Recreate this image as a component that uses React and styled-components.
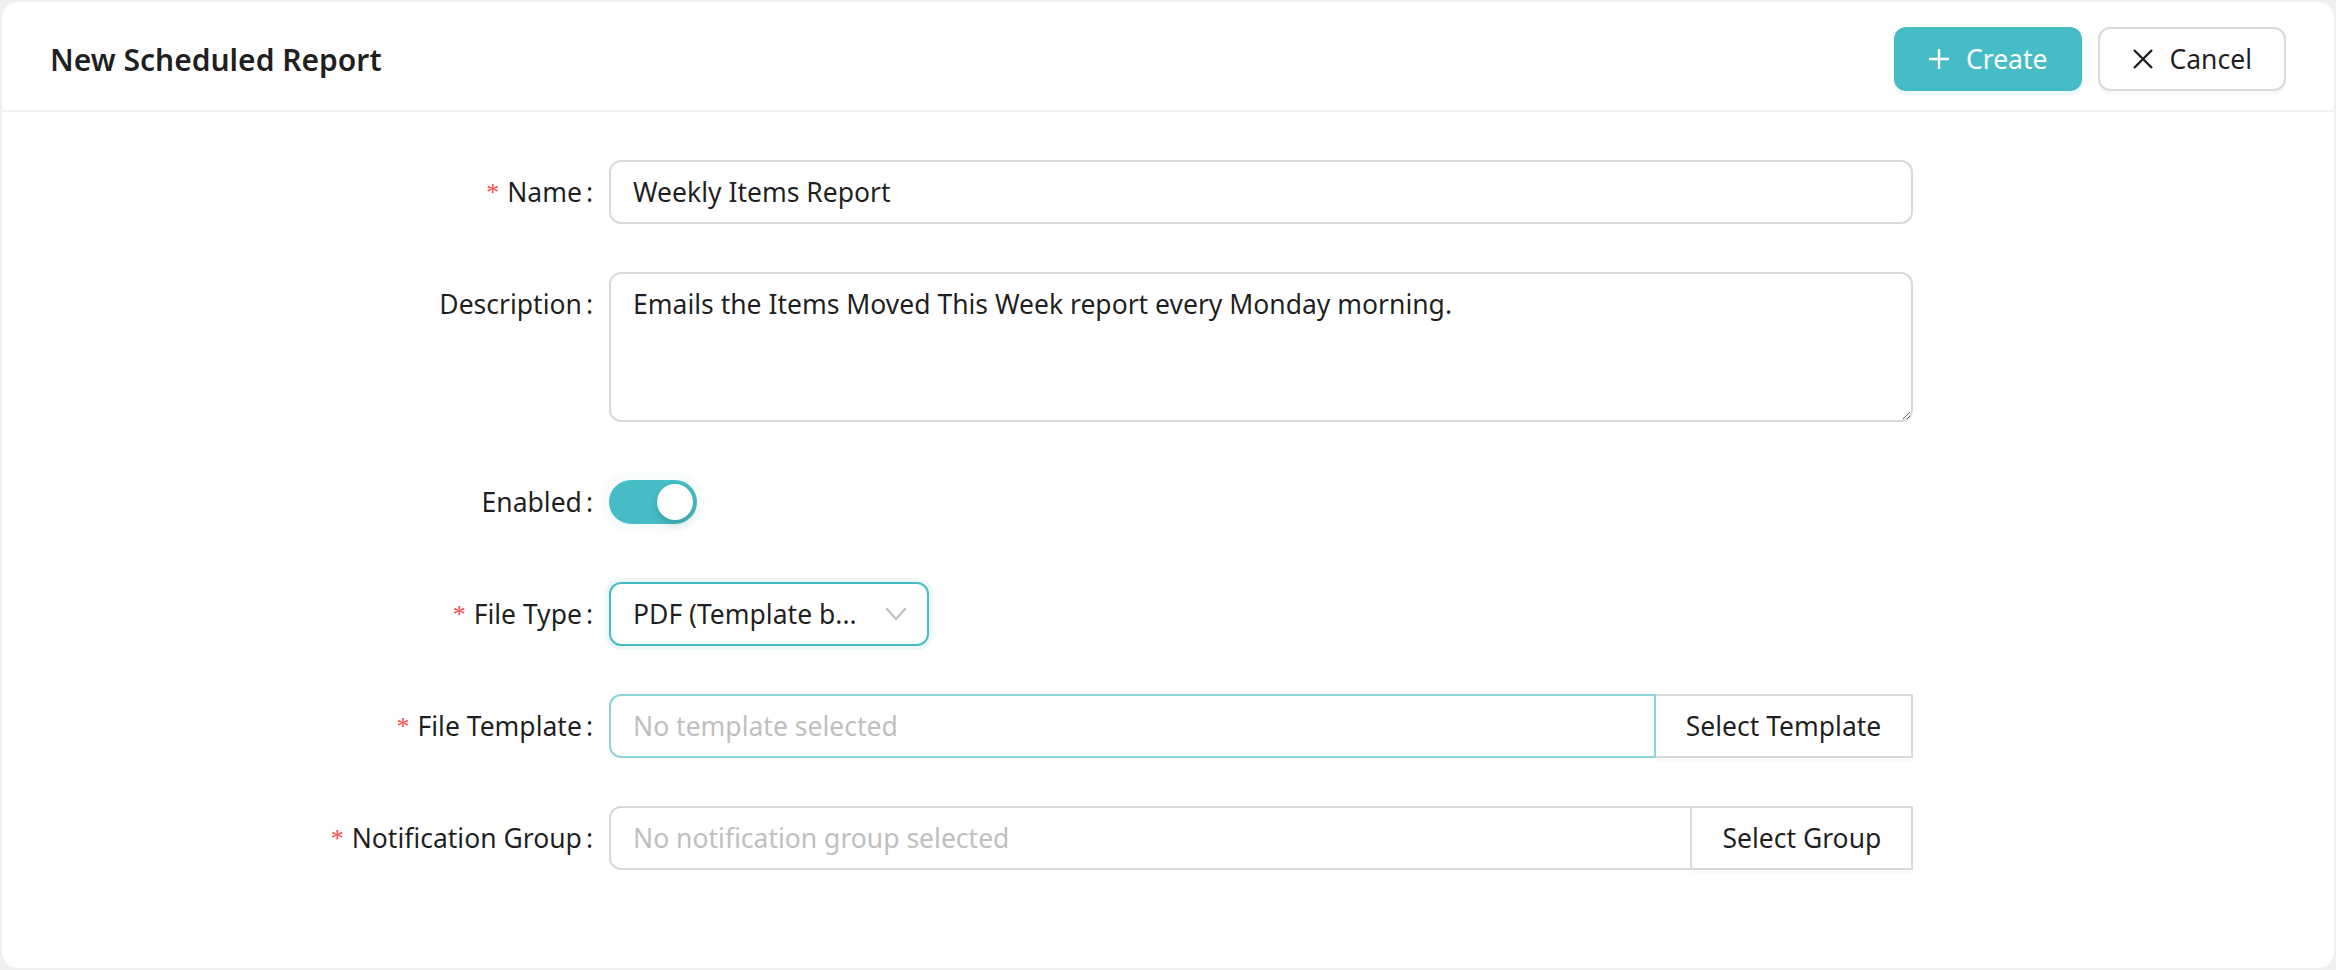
import React from 'react'
import styled, { createGlobalStyle } from 'styled-components'

const teal = '#46bdc6'
const textColor = 'rgba(0, 0, 0, 0.88)'

const GlobalStyle = createGlobalStyle`
  * { box-sizing: border-box; }
  html, body {
    margin: 0;
    background: #f0f0f0;
    font-family: "Noto Sans", "Segoe UI", Roboto, sans-serif;
    color: ${textColor};
  }
`

const Page = styled.div`
  padding: 2px;
  height: 970px;
`

const Card = styled.div`
  background: #fff;
  border-radius: 16px;
  height: 966px;
  display: flex;
  flex-direction: column;
`

const Head = styled.div`
  height: 110px;
  padding: 6px 48px 0;
  display: flex;
  align-items: center;
  justify-content: space-between;
  border-bottom: 2px solid #f0f0f0;
`

const Title = styled.div`
  font-size: 30px;
  font-weight: 600;
  color: ${textColor};
`

const Actions = styled.div`
  display: flex;
  gap: 16px;
`

const Button = styled.button`
  height: 64px;
  padding: 0 32px;
  display: inline-flex;
  align-items: center;
  gap: 16px;
  font-family: inherit;
  font-size: 26.5px;
  border-radius: 12px;
  cursor: pointer;
  border: 2px solid ${p => (p.$primary ? teal : '#d9d9d9')};
  background: ${p => (p.$primary ? teal : '#fff')};
  color: ${p => (p.$primary ? '#fff' : textColor)};
  box-shadow: ${p => (p.$primary ? '0 4px 0 rgba(70, 189, 198, 0.1)' : '0 4px 0 rgba(0, 0, 0, 0.02)')};
`

const Body = styled.div`
  padding: 48px;
  display: flex;
  flex-direction: column;
  gap: 48px;
`

const Row = styled.div`
  display: flex;
  align-items: flex-start;
`

const Label = styled.label`
  width: 25%;
  height: 64px;
  display: flex;
  align-items: center;
  justify-content: flex-end;
  font-size: 26.5px;
  white-space: nowrap;
`

const Required = styled.span`
  color: #ff4d4f;
  font-family: "Liberation Serif", serif;
  font-size: 26px;
  line-height: 1;
  margin-right: 8px;
  position: relative;
  top: 1px;
`

const Colon = styled.span`
  margin: 0 16px 0 4px;
`

const Control = styled.div`
  width: 58.333%;
  min-height: 64px;
  display: flex;
  align-items: center;
`

const field = `
  font-family: inherit;
  font-size: 26.5px;
  color: ${textColor};
  background: #fff;
  border: 2px solid #d9d9d9;
  border-radius: 12px;
  padding: 0 22px;
  outline: none;
`

const TextInput = styled.input`
  ${field}
  width: 100%;
  height: 64px;
  &::placeholder { color: #bfbfbf; }
`

const TextArea = styled.textarea`
  ${field}
  width: 100%;
  height: 150px;
  padding: 8px 22px;
  line-height: 44px;
  resize: vertical;
`

const Switch = styled.div`
  width: 88px;
  height: 44px;
  border-radius: 22px;
  background: ${teal};
  display: flex;
  align-items: center;
  justify-content: flex-end;
  padding: 4px;
  box-shadow: 0 0 0 8px rgba(70, 189, 198, 0.04);
`

const Knob = styled.span`
  width: 36px;
  height: 36px;
  border-radius: 50%;
  background: #fff;
  box-shadow: 0 4px 8px rgba(0, 35, 11, 0.2);
`

const Select = styled.div`
  ${field}
  width: 320px;
  height: 64px;
  border-color: ${teal};
  box-shadow: 0 0 0 4px rgba(70, 189, 198, 0.1);
  display: flex;
  align-items: center;
  justify-content: space-between;
  padding-right: 20px;
`

const Group = styled.div`
  display: flex;
  width: 100%;
  height: 64px;
`

const GroupInput = styled.input`
  ${field}
  flex: 1;
  min-width: 0;
  height: 64px;
  border-radius: 12px 0 0 12px;
  border-color: ${p => (p.$active ? '#8fd3d6' : '#d9d9d9')};
  &::placeholder { color: #bfbfbf; }
`

const AddonButton = styled.button`
  height: 64px;
  padding: 0 30px;
  font-family: inherit;
  font-size: 26.5px;
  color: ${textColor};
  background: #fff;
  border: 2px solid #d9d9d9;
  border-left: none;
  border-radius: 0;
  box-shadow: 0 4px 0 rgba(0, 0, 0, 0.02);
  cursor: pointer;
`

const PlusIcon = () => (
  <svg width="22" height="22" viewBox="0 0 22 22">
    <path d="M11 1v20M1 11h20" stroke="currentColor" strokeWidth="2.4" fill="none" />
  </svg>
)

const CloseIcon = () => (
  <svg width="22" height="22" viewBox="0 0 22 22">
    <path d="M2 2l18 18M20 2L2 20" stroke="currentColor" strokeWidth="2.4" fill="none" />
  </svg>
)

const Chevron = () => (
  <svg width="22" height="14" viewBox="0 0 22 14">
    <path d="M1.5 1.5L11 12l9.5-10.5" stroke="#bfbfbf" strokeWidth="2.2" fill="none" />
  </svg>
)

const FormRow = ({ label, required, children }) => (
  <Row>
    <Label>
      {required && <Required>*</Required>}
      {label}
      <Colon>:</Colon>
    </Label>
    <Control>{children}</Control>
  </Row>
)

export default function App() {
  return (
    <Page>
      <GlobalStyle />
      <Card>
        <Head>
          <Title>New Scheduled Report</Title>
          <Actions>
            <Button $primary>
              <PlusIcon />
              Create
            </Button>
            <Button>
              <CloseIcon />
              Cancel
            </Button>
          </Actions>
        </Head>
        <Body>
          <FormRow label="Name" required>
            <TextInput defaultValue="Weekly Items Report" />
          </FormRow>
          <FormRow label="Description">
            <TextArea defaultValue="Emails the Items Moved This Week report every Monday morning." />
          </FormRow>
          <FormRow label="Enabled">
            <Switch>
              <Knob />
            </Switch>
          </FormRow>
          <FormRow label="File Type" required>
            <Select>
              <span>PDF (Template b...</span>
              <Chevron />
            </Select>
          </FormRow>
          <FormRow label="File Template" required>
            <Group>
              <GroupInput $active placeholder="No template selected" />
              <AddonButton>Select Template</AddonButton>
            </Group>
          </FormRow>
          <FormRow label="Notification Group" required>
            <Group>
              <GroupInput placeholder="No notification group selected" />
              <AddonButton>Select Group</AddonButton>
            </Group>
          </FormRow>
        </Body>
      </Card>
    </Page>
  )
}
